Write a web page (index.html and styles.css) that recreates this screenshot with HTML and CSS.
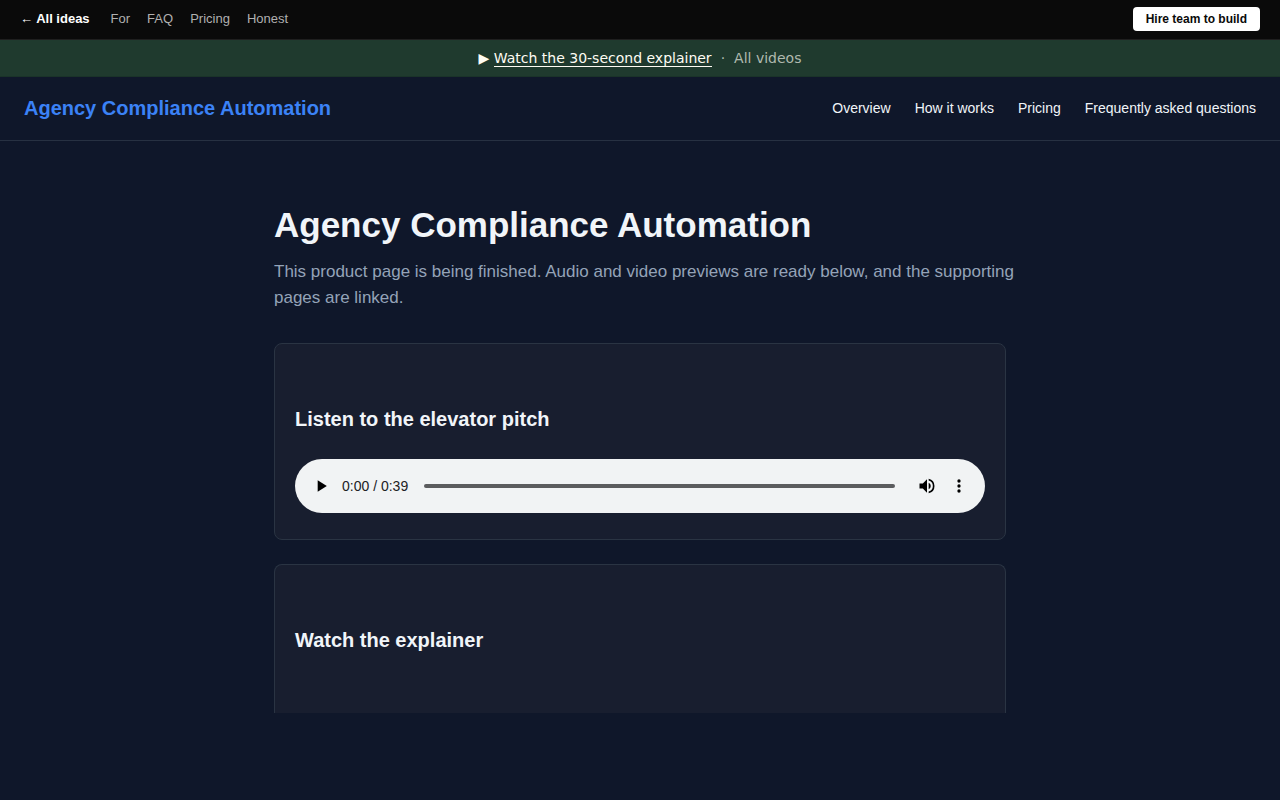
FILE: index.html
```html
<!DOCTYPE html>
<html lang="en">
<head>
<meta charset="utf-8">
<meta name="viewport" content="width=device-width, initial-scale=1">
<title>Agency Compliance Automation</title>
<link rel="stylesheet" href="styles.css">
</head>
<body>
<nav class="ideas-bar" aria-label="Ideas">
  <a class="ideas-home" href="#ideas">← All ideas</a>
  <a class="ideas-link" href="#for">For</a>
  <a class="ideas-link" href="#faq">FAQ</a>
  <a class="ideas-link" href="#pricing">Pricing</a>
  <a class="ideas-link" href="#honest">Honest</a>
  <a class="hire" href="#hire">Hire team to build</a>
</nav>
<div class="video-bar">
  <span class="video-play">▶ <a class="video-main" href="#watch">Watch the 30-second explainer</a></span>
  <span class="video-dot">·</span>
  <a class="video-all" href="#videos">All videos</a>
</div>
<header class="site-header">
  <a class="brand" href="#top">Agency Compliance Automation</a>
  <nav class="site-nav" aria-label="Main">
    <a href="#overview">Overview</a>
    <a href="#how">How it works</a>
    <a href="#pricing">Pricing</a>
    <a href="#questions">Frequently asked questions</a>
  </nav>
</header>
<main class="page">
  <h1 class="title">Agency Compliance Automation</h1>
  <p class="lead">This product page is being finished. Audio and video previews are ready below, and the supporting pages are linked.</p>
  <section class="card" id="listen">
    <h2 class="card-title">Listen to the elevator pitch</h2>
    <div class="player">
      <button class="player-button" type="button" aria-label="Play">
        <svg viewBox="0 0 24 24" width="20" height="20"><path d="M8 5v14l11-7z"/></svg>
      </button>
      <span class="player-time">0:00 / 0:39</span>
      <input class="player-seek" type="range" min="0" max="39" value="0" aria-label="Seek">
      <button class="player-button" type="button" aria-label="Mute">
        <svg viewBox="0 0 24 24" width="20" height="20"><path d="M3 9v6h4l5 5V4L7 9H3zm13.500 3A4.500 4.500 0 0 0 14 7.970v8.050A4.470 4.470 0 0 0 16.500 12zM14 3.230v2.060a7 7 0 0 1 0 13.420v2.060a9 9 0 0 0 0-17.540z"/></svg>
      </button>
      <button class="player-button" type="button" aria-label="More options">
        <svg viewBox="0 0 24 24" width="20" height="20"><path d="M12 8a2 2 0 1 0 0-4 2 2 0 0 0 0 4zm0 2a2 2 0 1 0 0 4 2 2 0 0 0 0-4zm0 6a2 2 0 1 0 0 4 2 2 0 0 0 0-4z"/></svg>
      </button>
    </div>
  </section>
  <section class="card card-open" id="watch">
    <h2 class="card-title">Watch the explainer</h2>
  </section>
</main>
</body>
</html>
```

FILE: styles.css
```css
* { box-sizing: border-box; }
body {
  margin: 0;
  background: #0f172a;
  color: #f1f5f9;
  font-family: "Liberation Sans", Arial, sans-serif;
}
a { color: inherit; text-decoration: none; }
.ideas-bar {
  display: flex;
  align-items: center;
  gap: 17px;
  padding: 7px 20px 8px;
  background: #0a0a0a;
  border-bottom: 1px solid #1f1f1f;
  font-size: 13px;
  line-height: 24px;
  color: #b0b0b0;
}
.ideas-home { color: #fff; font-weight: bold; margin-right: 4px; }
.hire {
  margin-left: auto;
  padding: 0 13px;
  border-radius: 4px;
  background: #fff;
  color: #0a0a0a;
  font-size: 12px;
  font-weight: bold;
}
.video-bar {
  display: flex;
  justify-content: center;
  gap: 9px;
  padding: 8px 16px;
  background: #1f3a2e;
  border-bottom: 1px solid #1a3329;
  color: #fefcf3;
  font-family: "DejaVu Sans", sans-serif;
  font-size: 14px;
  line-height: 20px;
}
.video-main { border-bottom: 1px solid #fefcf3; }
.video-dot, .video-all { color: #afb9ae; }
.site-header {
  display: flex;
  align-items: center;
  justify-content: space-between;
  padding: 16px 24px;
  border-bottom: 1px solid #273142;
  line-height: 31px;
}
.brand { color: #3b82f6; font-size: 20px; font-weight: bold; }
.site-nav { display: flex; gap: 24px; font-size: 14px; }
.page {
  max-width: 780px;
  margin: 0 auto;
  padding: 64px 24px;
}
.title { margin: 0 0 14px; font-size: 35px; line-height: 40px; }
.lead { margin: 0 -8px 32px 0; color: #94a3b8; font-size: 17px; line-height: 26px; }
.card {
  margin-bottom: 24px;
  padding: 60px 20px 26px;
  background: #181e2f;
  border: 1px solid #2a3443;
  border-radius: 8px;
}
.card-title { margin: 0 0 24px; font-size: 20px; line-height: 31px; }
.card-open {
  padding-bottom: 33px;
  border-bottom: 0;
  border-radius: 8px 8px 0 0;
}
.player {
  display: flex;
  align-items: center;
  height: 54px;
  padding: 0 10px;
  border-radius: 27px;
  background: #f1f3f4;
  color: #202124;
}
.player-button {
  display: grid;
  place-items: center;
  width: 32px;
  height: 32px;
  padding: 0;
  border: 0;
  background: none;
}
.player-time { margin: 0 16px 0 5px; font-size: 14px; }
.player-seek {
  flex: 1;
  min-width: 0;
  height: 4px;
  margin: 0 16px 0 0;
  appearance: none;
  border-radius: 2px;
  background: #5b5c5e;
}
.player-seek::-webkit-slider-thumb { appearance: none; width: 0; height: 0; }
```
